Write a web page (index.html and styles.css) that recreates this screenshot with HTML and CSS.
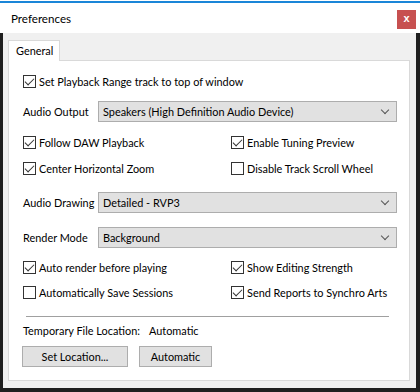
FILE: index.html
```html
<!DOCTYPE html>
<html>
<head>
<meta charset="utf-8">
<link rel="stylesheet" href="styles.css">
</head>
<body>
<div class="window">
  <div class="titlebar">
    <div class="accent"></div>
    <div class="titlerow">
      <span class="title">Preferences</span>
      <span class="close">x</span>
    </div>
  </div>
  <div class="client">
    <div class="tabs"><div class="tab">General</div></div>
    <div class="panel">
      <label class="check r1"><span class="box on"></span><span>Set Playback Range track to top of window</span></label>

      <div class="field r2"><span class="flabel">Audio Output</span><div class="select"><span>Speakers (High Definition Audio Device)</span><span class="chev"></span></div></div>

      <div class="pair r3">
        <label class="check"><span class="box on"></span><span>Follow DAW Playback</span></label>
        <label class="check"><span class="box on"></span><span>Enable Tuning Preview</span></label>
      </div>
      <div class="pair r4">
        <label class="check"><span class="box on"></span><span>Center Horizontal Zoom</span></label>
        <label class="check"><span class="box"></span><span>Disable Track Scroll Wheel</span></label>
      </div>

      <div class="field r5"><span class="flabel">Audio Drawing</span><div class="select"><span>Detailed - RVP3</span><span class="chev"></span></div></div>
      <div class="field r6"><span class="flabel">Render Mode</span><div class="select"><span>Background</span><span class="chev"></span></div></div>

      <div class="pair r7">
        <label class="check"><span class="box on"></span><span>Auto render before playing</span></label>
        <label class="check"><span class="box on"></span><span>Show Editing Strength</span></label>
      </div>
      <div class="pair r8">
        <label class="check"><span class="box"></span><span>Automatically Save Sessions</span></label>
        <label class="check"><span class="box on"></span><span>Send Reports to Synchro Arts</span></label>
      </div>

      <div class="sep"></div>
      <div class="temp"><span class="tlabel">Temporary File Location:</span><span>Automatic</span></div>
      <div class="buttons">
        <button class="btn wide">Set Location...</button>
        <button class="btn auto">Automatic</button>
      </div>
    </div>
  </div>
</div>
</body>
</html>
```

FILE: styles.css
```css
* { box-sizing: border-box; }
html, body { margin: 0; padding: 0; }
body {
  background: #1f1f1f;
  width: 420px;
  height: 392px;
  overflow: hidden;
  font-family: Lato, "Liberation Sans", Arial, sans-serif;
  font-size: 10.9px;
  color: #000;
  white-space: nowrap;
}
.window { width: 420px; }
.titlebar {
  background: #fff;
  height: 33px;
  padding-top: 1px;
}
.accent { height: 2px; background: #1a86d8; }
.titlerow {
  display: flex;
  justify-content: space-between;
  align-items: flex-start;
  height: 30px;
}
.title {
  font-size: 11.6px;
  margin-left: 11px;
  margin-top: 9px;
  color: #000;
}
.close {
  width: 19px;
  height: 19px;
  margin-top: 7px;
  margin-right: 4px;
  background: #c75050;
  color: #fff;
  font-family: "Liberation Sans", Arial, sans-serif;
  font-weight: bold;
  font-size: 11px;
  line-height: 17px;
  text-align: center;
}
.client {
  background: #f0f0f0;
  margin: 0 4px 0 3px;
  height: 355px;
  padding: 7px 6px 7px 5px;
}
.tabs { display: flex; height: 20px; }
.tab {
  width: 52px;
  height: 21px;
  background: #fff;
  border: 1px solid #d9d9d9;
  border-bottom: none;
  padding-left: 7px;
  line-height: 19px;
  position: relative;
  z-index: 1;
}
.panel {
  background: #fff;
  border: 1px solid #d9d9d9;
  height: 321px;
  padding: 0 11px 0 14px;
}
.check {
  display: flex;
  align-items: center;
  height: 13px;
}
.box {
  width: 13px;
  height: 13px;
  border: 1px solid #333;
  background: #fff;
  margin-right: 3px;
  flex: none;
  position: relative;
}
.box.on::after {
  content: "";
  position: absolute;
  left: 3px;
  top: 0px;
  width: 4px;
  height: 8px;
  border-right: 1.3px solid #333;
  border-bottom: 1.3px solid #333;
  transform: rotate(45deg);
  transform-origin: center;
}
.r1 { margin-top: 14px; }
.field { display: flex; align-items: center; height: 21px; }
.r2 { margin-top: 13px; }
.r5 { margin-top: 17px; }
.r6 { margin-top: 14px; }
.flabel { width: 75px; flex: none; }
.select {
  width: 299px;
  height: 21px;
  background: #e1e1e1;
  border: 1px solid #adadad;
  display: flex;
  align-items: center;
  justify-content: space-between;
  padding: 0 6px 0 4px;
}
.chev {
  width: 6px;
  height: 6px;
  border-right: 1px solid #555;
  border-bottom: 1px solid #555;
  transform: rotate(45deg);
  margin-top: -3px;
  margin-right: 2px;
}
.pair {
  display: grid;
  grid-template-columns: 208px 1fr;
  height: 13px;
}
.r3 { margin-top: 14px; }
.r4 { margin-top: 13px; }
.r7 { margin-top: 13px; }
.r8 { margin-top: 12px; }
.sep {
  height: 1px;
  background: #a0a0a0;
  margin: 17px 9px 0 3px;
}
.temp {
  display: flex;
  height: 14px;
  line-height: 14px;
  margin-top: 7px;
}
.tlabel { width: 126px; flex: none; }
.buttons {
  display: flex;
  gap: 11px;
  margin-top: 8px;
  margin-left: -1px;
}
.btn {
  height: 21px;
  background: #e1e1e1;
  border: 1px solid #adadad;
  font: inherit;
  color: #000;
  padding: 0;
}
.wide { width: 106px; }
.auto { width: 73px; }
```
